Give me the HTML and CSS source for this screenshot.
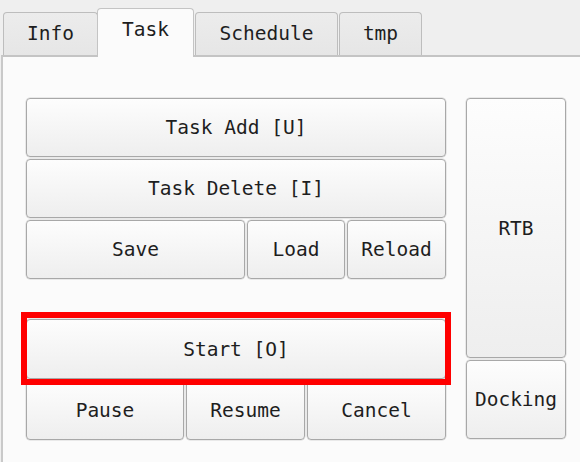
FILE: index.html
```html
<!DOCTYPE html>
<html>
<head>
<meta charset="utf-8">
<link rel="stylesheet" href="styles.css">
</head>
<body>
<div class="window">
  <div class="tabbar">
    <div class="tab tab-info">Info</div>
    <div class="tab tab-task active">Task</div>
    <div class="tab tab-schedule">Schedule</div>
    <div class="tab tab-tmp">tmp</div>
  </div>
  <div class="pane">
    <div class="grid">
      <div class="left">
        <button class="btn">Task Add [U]</button>
        <button class="btn">Task Delete [I]</button>
        <div class="row">
          <button class="btn w-save">Save</button>
          <button class="btn w-load">Load</button>
          <button class="btn w-reload">Reload</button>
        </div>
        <div class="spacer"></div>
        <div class="highlight-wrap">
          <button class="btn">Start [O]</button>
          <div class="highlight"></div>
        </div>
        <div class="row">
          <button class="btn w-pause">Pause</button>
          <button class="btn w-resume">Resume</button>
          <button class="btn w-cancel">Cancel</button>
        </div>
      </div>
      <div class="right">
        <button class="btn rtb">RTB</button>
        <button class="btn docking">Docking</button>
      </div>
    </div>
  </div>
</div>
</body>
</html>
```

FILE: styles.css
```css
html, body {
  margin: 0;
  padding: 0;
  background: #efefef;
}
.window {
  width: 580px;
  height: 462px;
  background: #efefef;
  font-family: "DejaVu Sans Mono", "Liberation Mono", monospace;
  font-size: 19.5px;
  color: #1e1e1e;
  overflow: hidden;
  display: flex;
  flex-direction: column;
}
.tabbar {
  height: 57px;
  display: flex;
  align-items: flex-end;
  padding-left: 3px;
  box-sizing: border-box;
  position: relative;
  z-index: 2;
  margin-bottom: -2px;
}
.tab {
  height: 43px;
  box-sizing: border-box;
  border: 1px solid #bdbdbd;
  border-bottom: none;
  border-radius: 4px 4px 0 0;
  background: linear-gradient(#ececec, #e6e6e6);
  display: flex;
  align-items: center;
  justify-content: center;
  padding-bottom: 2px;
  margin-bottom: 2px;
}
.tab-info { width: 95px; }
.tab-task { width: 97px; }
.tab-schedule { width: 143px; margin-left: 0; }
.tab-tmp { width: 83px; margin-left: 1px; }
.tab.active {
  height: 49px;
  margin-bottom: 0;
  background: #fbfbfb;
  border-color: #c4c4c4;
  padding-bottom: 8px;
  margin-left: -1px;
  margin-right: 1px;
}
.pane {
  flex: 1;
  margin-left: 1px;
  background: #fbfbfb;
  border-top: 2px solid #c4c4c4;
  border-left: 2px solid #c9c9c9;
  padding: 41px 0 0 23px;
  position: relative;
  z-index: 1;
}
.grid {
  display: grid;
  grid-template-columns: 420px 100px;
  column-gap: 20px;
}
.left, .right {
  display: flex;
  flex-direction: column;
  gap: 2px;
}
.btn {
  font: inherit;
  color: inherit;
  height: 59px;
  box-sizing: border-box;
  border: 1px solid #a8a8a8;
  border-radius: 4px;
  background: linear-gradient(#fdfdfd, #eeeeee);
  padding: 0;
  margin: 0;
  width: 100%;
  box-shadow: 0 0 0 0.5px #d8d8d8;
}
.row {
  display: flex;
  gap: 2px;
}
.w-save { width: 219px; }
.w-load { width: 98px; }
.w-reload { width: 99px; }
.w-pause { width: 158px; }
.w-resume { width: 119px; }
.w-cancel { width: 139px; }
.spacer { height: 36px; }
.highlight-wrap {
  position: relative;
}
.highlight-wrap .btn { height: 60px; }
.highlight {
  position: absolute;
  left: -5px;
  right: -5px;
  top: -7px;
  bottom: -6px;
  border: 6px solid #ff0000;
  pointer-events: none;
}
.rtb { height: 260px; }
.docking { height: 79px; }
```
